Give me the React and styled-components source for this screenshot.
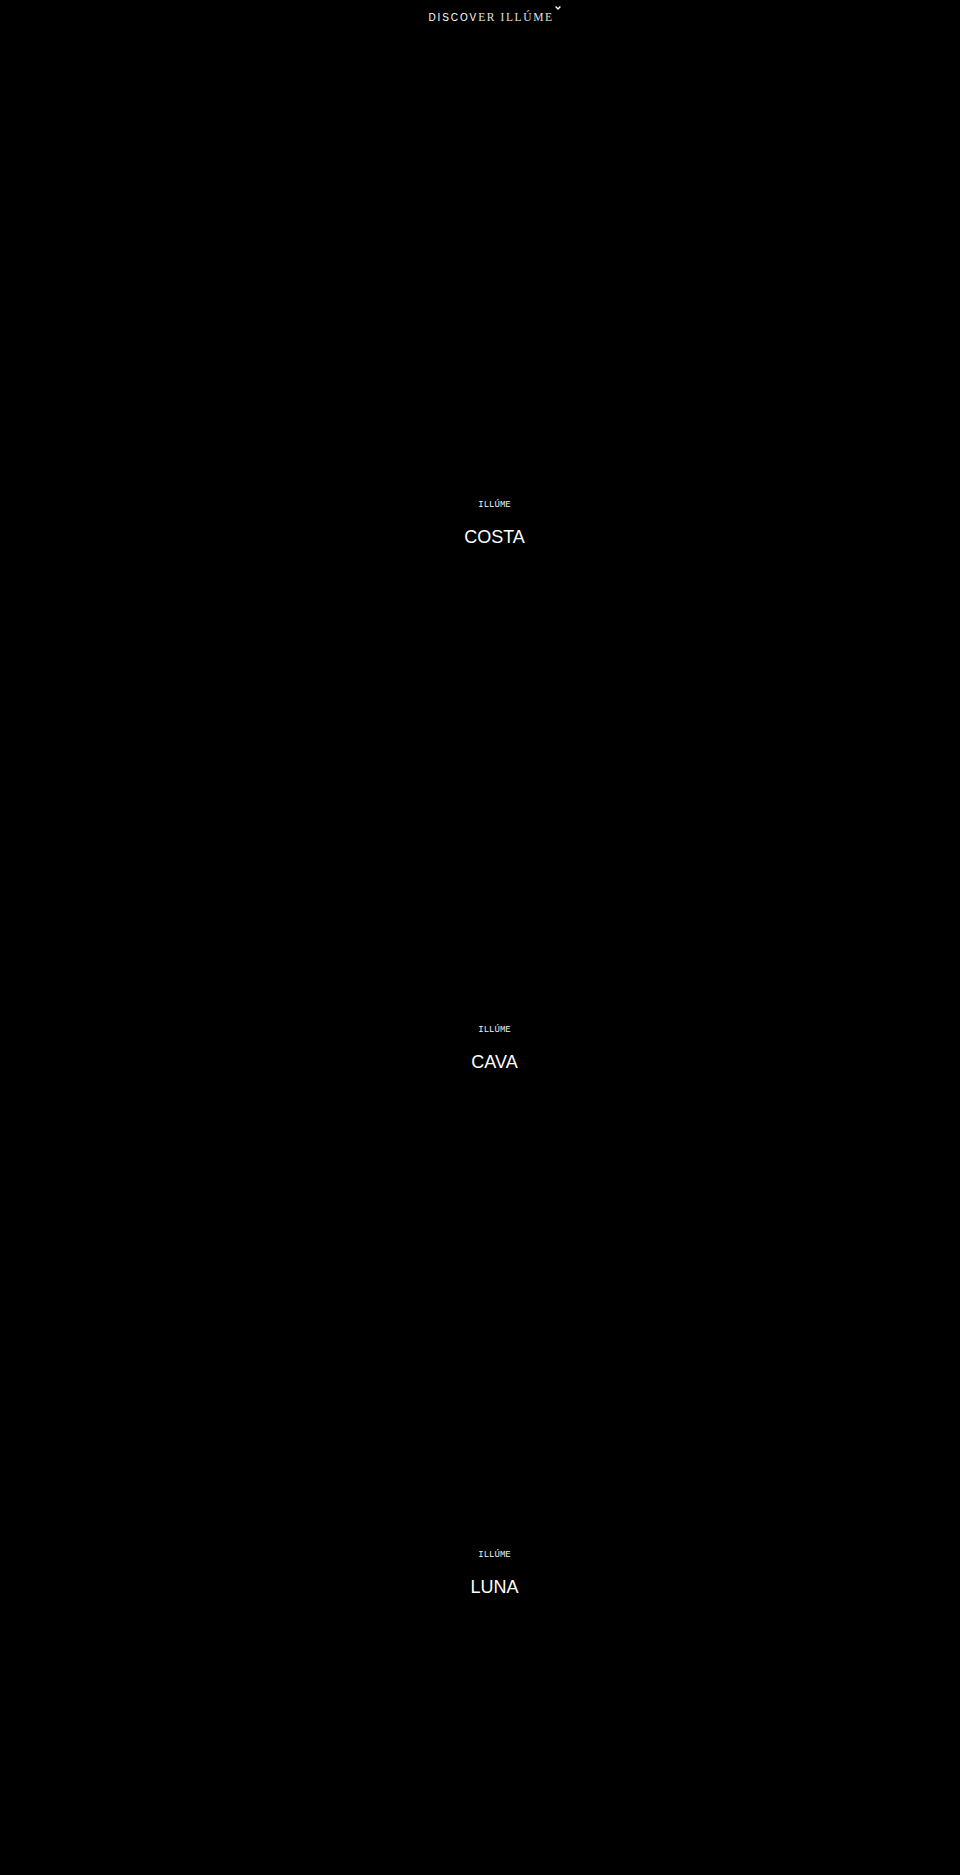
import styled, { createGlobalStyle } from 'styled-components';

const GlobalStyle = createGlobalStyle`
  html, body {
    margin: 0;
    padding: 0;
    background: #000;
    min-height: 100%;
  }
  body {
    font-family: 'Liberation Sans', Arial, sans-serif;
    color: #fff;
  }
`;

const collections = [
  { id: 'costa', name: 'COSTA' },
  { id: 'cava', name: 'CAVA' },
  { id: 'luna', name: 'LUNA' },
];

const App = () => {
  return (
    <Page>
      <GlobalStyle />
      <Header>
        <Discover>
          <span>DISCOV</span>
          <SerifPart>ER ILLÚME</SerifPart>
          <Chevron viewBox="0 0 6 4" aria-hidden="true">
            <polyline points="0.6,0.6 3,3 5.4,0.6" />
          </Chevron>
        </Discover>
      </Header>
      <Sections>
        {collections.map(item => (
          <Section key={item.id}>
            <Tag>ILLÚME</Tag>
            <Title>{item.name}</Title>
          </Section>
        ))}
      </Sections>
    </Page>
  );
};
export default App;

const Page = styled.div`
  min-height: 1875px;
  background: #000;
  padding-left: 29px;
  box-sizing: border-box;
`;

const Header = styled.header`
  display: flex;
  justify-content: center;
  padding: 10px 0;
  height: 34px;
  box-sizing: border-box;
`;

const Discover = styled.div`
  font-family: 'Liberation Sans', Arial, sans-serif;
  font-size: 10px;
  line-height: 14px;
  letter-spacing: 1.9px;
  color: #fff;
  white-space: nowrap;
  display: flex;
  align-items: baseline;
`;

const SerifPart = styled.span`
  font-family: 'Liberation Serif', 'Times New Roman', serif;
  font-size: 11.5px;
  letter-spacing: 1.6px;
  color: #e0e0e0;
`;

const Chevron = styled.svg`
  width: 6px;
  height: 4px;
  align-self: flex-start;
  margin-top: -4px;
  margin-left: 1px;
  fill: none;
  stroke: #fff;
  stroke-width: 1.4;
`;

const Sections = styled.div`
  display: flex;
  flex-direction: column;
`;

const Section = styled.section`
  height: 525px;
  display: flex;
  flex-direction: column;
  align-items: center;
  justify-content: flex-end;
  padding-bottom: 13px;
  box-sizing: border-box;
`;

const Tag = styled.p`
  margin: 0 0 17px;
  font-family: 'Liberation Mono', 'Courier New', monospace;
  font-size: 9px;
  line-height: 12px;
  color: #f2f2f2;
`;

const Title = styled.h2`
  margin: 0;
  font-family: 'Liberation Sans', Arial, sans-serif;
  font-weight: 400;
  font-size: 18px;
  line-height: 18px;
  color: #fff;
`;
